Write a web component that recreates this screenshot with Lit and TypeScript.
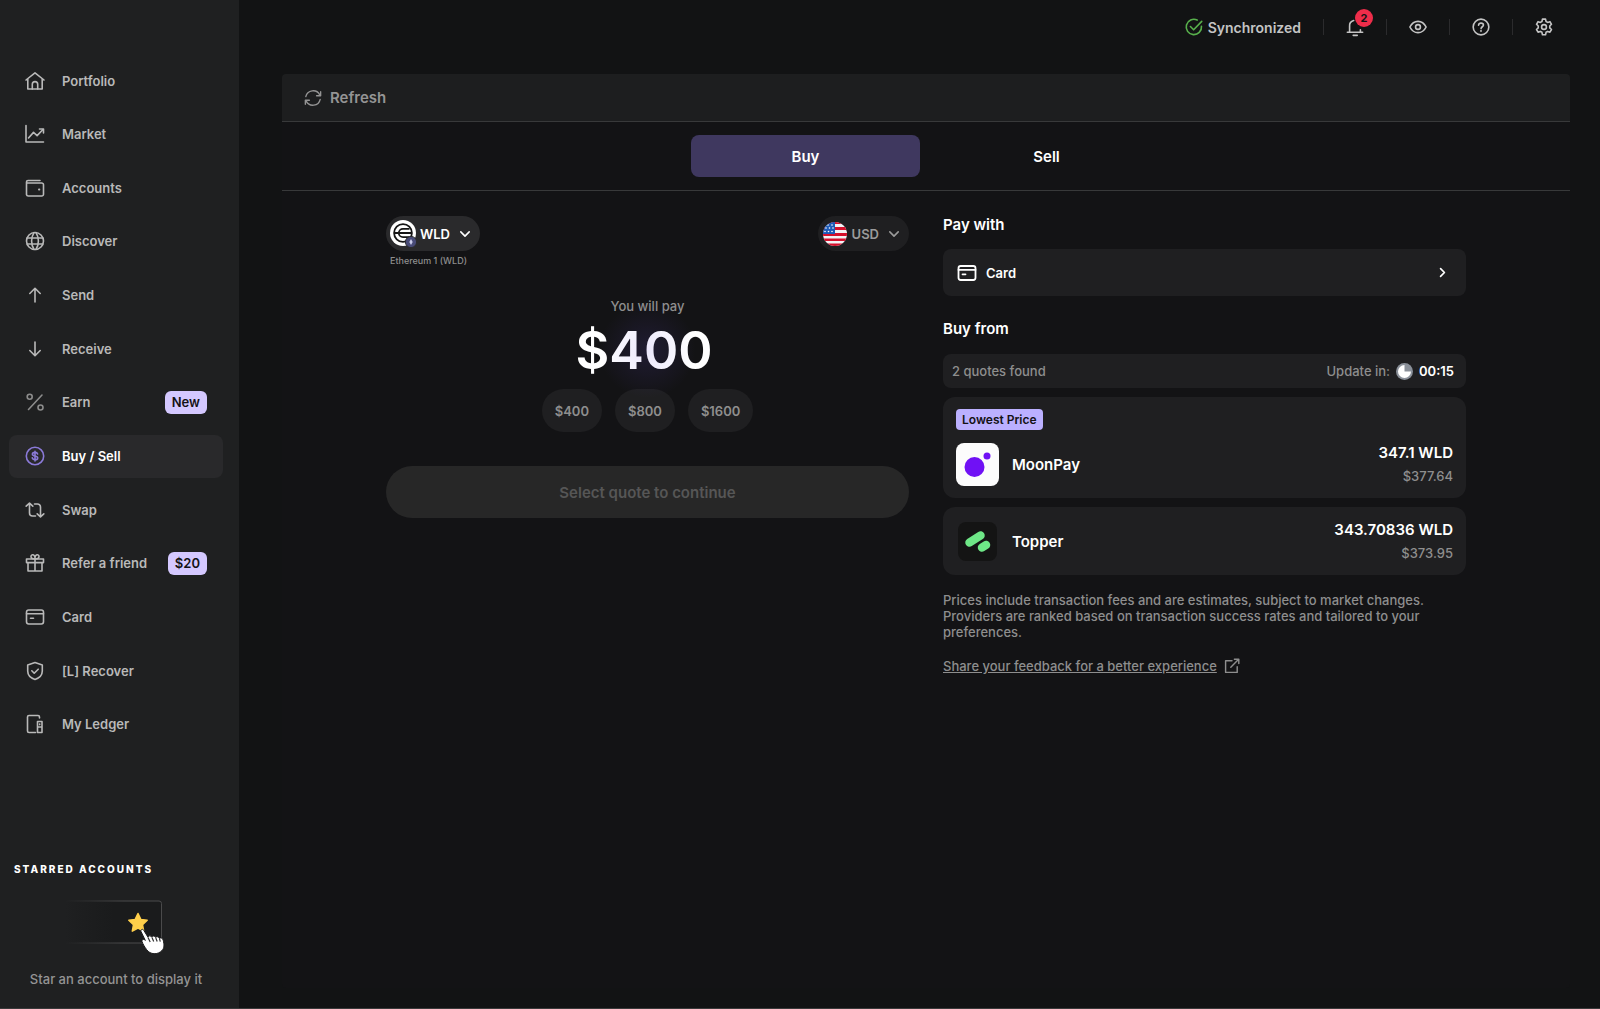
import { LitElement, html, css, svg, nothing, type TemplateResult, type SVGTemplateResult } from "lit";
import { customElement, property, state } from "lit/decorators.js";
import { classMap } from "lit/directives/class-map.js";

const icons: Record<string, SVGTemplateResult> = {
  home: svg`<path d="M1 9 10 1.800 19 9M2.800 8v10h14.400V8"/><path d="M7.300 18v-4.700a2.700 2.700 0 0 1 5.400 0V18"/>`,
  market: svg`<path d="M1 1.500V18h17.500M3.500 14l5-5.600 3.600 3.200L18 5.500"/><path d="M14.500 5h4v4"/>`,
  wallet: svg`<path d="M15 2.500H3A1.500 1.500 0 0 0 1.500 4v12.500A1.800 1.800 0 0 0 3.300 18h13.400a1.800 1.800 0 0 0 1.800-1.800V6.800A1.800 1.800 0 0 0 16.700 5H2.500"/><path d="M14 11.400h.3" stroke-width="2"/>`,
  globe: svg`<circle cx="10" cy="10" r="8.500"/><path d="M2.300 7h15.400M2.300 13h15.400"/><path d="M9 1.600c-3.200 5-3.200 11.800 0 16.800M11 1.600c3.200 5 3.200 11.800 0 16.800"/>`,
  send: svg`<path d="M10 17V3.500M4.800 8.500 10 3.300l5.200 5.200"/>`,
  receive: svg`<path d="M10 3v13.500M4.800 11.500l5.200 5.200 5.200-5.200"/>`,
  percent: svg`<path d="M17 3 3.500 17.500"/><circle cx="4.700" cy="4.700" r="2.500"/><circle cx="15.500" cy="15.500" r="2.500"/>`,
  dollar: svg`<circle cx="10" cy="10" r="8.700"/><path d="M12.600 8c-.3-1-1.300-1.600-2.600-1.600-1.500 0-2.600.7-2.600 1.800 0 2.600 5.300 1 5.300 3.700 0 1.100-1.100 1.800-2.700 1.800-1.400 0-2.500-.7-2.700-1.800M10 5.300v9.600"/>`,
  swap: svg`<path d="M4.500 3.800V13a3 3 0 0 0 3 3h3M1.200 6.200l3.300-3 3.300 3M15.500 16.200V7a3 3 0 0 0-3-3h-3M12.200 13.800l3.300 3 3.300-3"/>`,
  gift: svg`<path d="M1.500 6h17v3.600h-17zM3 9.600V18h14V9.600M10 6v12"/><path d="M10 6C8.500 6 6 5.600 6 3.600 6 1.200 9.400.8 10 4.500 10.600.8 14 1.200 14 3.600 14 5.600 11.500 6 10 6z"/>`,
  card: svg`<rect x="1.500" y="3" width="17" height="14" rx="2.200"/><path d="M1.500 6.800h17M5.500 11.300h3"/>`,
  shield: svg`<path d="M10 1.600 2.700 4v6c0 4 3 7 7.300 8.500 4.300-1.500 7.300-4.500 7.300-8.500V4z"/><path d="m6.800 9.800 2.400 2.400 4-4"/>`,
  ledger: svg`<path d="M10.500 18.500H4A1.500 1.500 0 0 1 2.500 17V3A1.500 1.500 0 0 1 4 1.500h9A1.500 1.500 0 0 1 14.500 3v1"/><path d="M12.500 7.500h4.500v11h-4.500zM12.500 13h4.500M14.700 10v.6"/>`,
  synced: svg`<path d="M18.300 9.200A8.500 8.500 0 1 1 13.500 2.300"/><path d="m6 9.500 3.600 3.600 9-9.300"/>`,
  bell: svg`<path d="M1.500 15.800h17M4 15.500V9a6 6 0 0 1 4.500-6.200M16 15.500V13"/><path d="M8 19.300h4.500"/>`,
  eye: svg`<path d="M1 10c2-4 5.200-6.300 9-6.300S17 6 19 10c-2 4-5.200 6.300-9 6.300S3 14 1 10z"/><circle cx="10" cy="10" r="2.700"/>`,
  help: svg`<circle cx="10" cy="10" r="8.700"/><path d="M7.300 8c.2-1.500 1.300-2.300 2.700-2.300 1.600 0 2.700.9 2.700 2.200 0 1.800-2.600 1.900-2.600 3.900M10 14v.8"/>`,
  gear: svg`<path d="M8.300 1.300h3.400l.6 2.600 1.700 1 2.600-.8 1.700 2.900-1.900 1.900v2l1.900 1.900-1.700 2.900-2.600-.8-1.700 1-.6 2.700H8.300l-.6-2.700-1.700-1-2.600.8-1.700-2.900 1.900-1.900v-2L1.700 7l1.700-2.900 2.600.8 1.700-1z"/><circle cx="10" cy="10" r="2.700"/>`,
  refresh: svg`<path d="M2 8.500A8.300 8.300 0 0 1 17.500 6.500M18.500 3v4.500H14M18 11.500A8.300 8.300 0 0 1 2.500 13.500M1.500 17v-4.500H6"/>`,
  down: svg`<path d="m3 6.500 7 7 7-7"/>`,
  right: svg`<path d="m6.500 3 7 7-7 7"/>`,
  external: svg`<path d="M10 3.500H2V18h14.500v-7M13 1.500h5.500V7M18 2 8.500 11.500"/>`,
};

@customElement("ui-icon")
export class UiIcon extends LitElement {
  static styles = css`
    :host { display: block; flex: none; width: 20px; height: 20px; }
    svg { display: block; width: 100%; height: 100%; fill: none; stroke: currentColor; stroke-linecap: round; stroke-linejoin: round; overflow: visible; }
  `;
  @property() name = "";
  @property({ type: Number }) weight = 1.6;
  render() {
    return html`<svg viewBox="0 0 20 20" aria-hidden="true" stroke-width=${this.weight}>${icons[this.name]}</svg>`;
  }
}

interface NavItem { icon: string; label: string; badge?: string; active?: boolean }

const navItems: NavItem[] = [
  { icon: "home", label: "Portfolio" },
  { icon: "market", label: "Market" },
  { icon: "wallet", label: "Accounts" },
  { icon: "globe", label: "Discover" },
  { icon: "send", label: "Send" },
  { icon: "receive", label: "Receive" },
  { icon: "percent", label: "Earn", badge: "New" },
  { icon: "dollar", label: "Buy / Sell", active: true },
  { icon: "swap", label: "Swap" },
  { icon: "gift", label: "Refer a friend", badge: "$20" },
  { icon: "card", label: "Card" },
  { icon: "shield", label: "[L] Recover" },
  { icon: "ledger", label: "My Ledger" },
];

@customElement("side-bar")
export class SideBar extends LitElement {
  static styles = css`
    :host { display: flex; flex-direction: column; box-sizing: border-box; padding: 59px 0 21px; background: #1f2021; }
    nav { flex: 1; display: flex; flex-direction: column; justify-content: space-between; padding: 0 16px 0 9px; }
    .item { display: flex; align-items: center; height: 43px; padding: 0 16px; gap: 17px; border-radius: 8px; color: #b9b9b9; font-size: 13px; font-weight: 600; text-decoration: none; }
    .item.active { background: #29292b; color: #fff; }
    .item.active ui-icon { color: #8b7ad8; }
    .item.dim ui-icon { color: #8c8c8c; }
    .badge { margin-left: auto; padding: 0 7px; border-radius: 6px; background: #d4c8ff; color: #131214; line-height: 23px; }
    .starred { margin-top: 115px; }
    h2 { margin: 0 14px; color: #fff; font-size: 10px; line-height: 16px; font-weight: 800; letter-spacing: 2px; }
    .art { display: block; width: 104px; height: 56px; margin: 22px 0 0 65px; }
    p { margin: 16px 7px 0 0; text-align: center; color: #949494; font-size: 13px; line-height: 16px; font-weight: 500; }
  `;
  render() {
    return html`
      <nav aria-label="Main">
        ${navItems.map((i) => html`
          <a href="#" class=${classMap({ item: true, active: !!i.active, dim: i.icon === "percent" })}>
            <ui-icon name=${i.icon}></ui-icon><span>${i.label}</span>
            ${i.badge ? html`<span class="badge">${i.badge}</span>` : nothing}
          </a>`)}
      </nav>
      <section class="starred">
        <h2>STARRED ACCOUNTS</h2>
        <svg class="art" viewBox="0 0 104 56" aria-hidden="true">
          <defs>
            <linearGradient id="edge" gradientUnits="userSpaceOnUse" x1="0" x2="97" y1="0" y2="0"><stop offset="0" stop-color="#4a4a4b" stop-opacity="0"/><stop offset=".6" stop-color="#4a4a4b"/></linearGradient>
            <linearGradient id="fill" gradientUnits="userSpaceOnUse" x1="0" x2="97" y1="0" y2="0"><stop offset="0" stop-color="#1a1b1c" stop-opacity="0"/><stop offset=".5" stop-color="#1a1b1c"/></linearGradient>
          </defs>
          <path d="M0 2h94a2.500 2.500 0 0 1 2.500 2.500v37a2.500 2.500 0 0 1-2.500 2.500H0z" fill="url(#fill)"/>
          <path d="M0 2h94a2.500 2.500 0 0 1 2.500 2.500v37a2.500 2.500 0 0 1-2.500 2.500H0" fill="none" stroke="url(#edge)"/>
          <path d="m73 14.500 2.800 5.900 6.400.8-4.700 4.500 1.200 6.400-5.700-3.100-5.700 3.100 1.200-6.400-4.700-4.500 6.400-.8z" fill="#ffcf4a" stroke="#ffcf4a" stroke-width="1.500" stroke-linejoin="round"/>
          <path d="M76 32.500c-.7-1.900 1.700-3 2.700-1.300l4.300 7c.5-1.700 2.900-1.900 3.700 0 .9-1.700 3.300-1.500 3.900.3 1.200-1.300 3.200-.9 3.700.9 1.600-1 3.500-.2 3.900 1.700 1 4.800 1.400 7.500-1.200 10.400-4.300 4.600-11.800 4.200-15.300-.8-1.900-2.700-4-5.800-4.700-8.300-.4-2 2.200-2.700 3.300-1z" fill="#fff" stroke="#1b1b1c" stroke-width="1"/>
          <path d="m83 38.500 2.200 4.500M87 38.500l1.700 4M90.800 39l1.400 3.500M94.500 39.800l.8 2.800" stroke="#333" stroke-width="1.200"/>
        </svg>
        <p>Star an account to display it</p>
      </section>`;
  }
}

@customElement("top-bar")
export class TopBar extends LitElement {
  static styles = css`
    :host { display: flex; align-items: center; justify-content: flex-end; height: 54px; padding-right: 47px; color: #c4c4c4; }
    button { display: flex; align-items: center; position: relative; padding: 0; border: 0; background: none; color: inherit; font: inherit; font-size: 14px; font-weight: 600; gap: 5px; }
    .tool { padding: 0 22px; border-left: 1px solid #2b2b2d; height: 16px; }
    .tool:last-child { padding-right: 0; }
    .sync { margin-right: 22px; }
    .sync ui-icon { color: #58b04c; }
    ui-icon { width: 18px; height: 18px; }
    .count { position: absolute; left: 31px; top: -10px; width: 18px; border-radius: 9px; background: #ee2d4a; color: #131214; font-size: 11px; line-height: 18px; font-weight: 700; text-align: center; }
  `;
  render() {
    return html`
      <button class="sync"><ui-icon name="synced" weight="1.8"></ui-icon>Synchronized</button>
      <button class="tool" aria-label="Notifications"><ui-icon name="bell" weight="1.8"></ui-icon><span class="count">2</span></button>
      <button class="tool" aria-label="Discreet mode"><ui-icon name="eye" weight="1.8"></ui-icon></button>
      <button class="tool" aria-label="Help"><ui-icon name="help" weight="1.8"></ui-icon></button>
      <button class="tool" aria-label="Settings"><ui-icon name="gear" weight="1.8"></ui-icon></button>`;
  }
}

const wldLogo = html`<svg class="coin" viewBox="0 0 28 28" aria-hidden="true">
  <circle cx="13" cy="13" r="13" fill="#fff"/>
  <g fill="none" stroke="#161616" stroke-width="1.800">
    <circle cx="13" cy="13" r="8.900"/><path d="M4.500 13h17M19.500 8.800H13a4.200 4.200 0 0 0 0 8.400h6.500"/>
  </g>
  <circle cx="21" cy="22" r="5.600" fill="#484b78" stroke="#2b2b2d"/>
  <path d="m21 19 1.700 3-1.700 3-1.700-3z" fill="#c9cbea"/>
</svg>`;

const usFlag = html`<svg class="flag" viewBox="0 0 24 24" aria-hidden="true">
  <defs><clipPath id="round"><circle cx="12" cy="12" r="12"/></clipPath></defs>
  <g clip-path="url(#round)">
    <path d="M0 0h24v24H0z" fill="#f3f3f5"/>
    <path d="M0 0h24v2H0zM0 5h24v3H0zM0 11h24v3H0zM0 16.500h24v2.500H0zM0 21.500h24V24H0z" fill="#d4102c"/>
    <path d="M0 0h12v12H0z" fill="#1d5bb8"/>
    <g fill="#fff"><circle cx="5" cy="3" r=".8"/><circle cx="9" cy="3" r=".8"/><circle cx="3" cy="6" r=".8"/><circle cx="6.500" cy="6" r=".8"/><circle cx="10" cy="6" r=".8"/><circle cx="2" cy="9.500" r=".8"/><circle cx="5.500" cy="9.500" r=".8"/><circle cx="9" cy="9.500" r=".8"/></g>
  </g>
</svg>`;

const moonpayLogo = html`<svg viewBox="0 0 43 43" aria-hidden="true">
  <rect width="43" height="43" rx="8" fill="#fcfcfc"/><circle cx="18.500" cy="24" r="10" fill="#7011f5"/><circle cx="31" cy="13" r="3.500" fill="#7011f5"/>
</svg>`;

const topperLogo = html`<svg viewBox="0 0 43 43" aria-hidden="true">
  <rect x="2" y="2" width="39" height="39" rx="8" fill="#141414"/>
  <g stroke="#6ee787" stroke-width="8.500" stroke-linecap="round"><path d="m13.500 22.500 11-7M26 27.500l4-2.500"/></g>
</svg>`;

interface Quote { name: string; logo: TemplateResult; amount: string; fiat: string; tag?: string }

const quotes: Quote[] = [
  { name: "MoonPay", logo: moonpayLogo, amount: "347.1 WLD", fiat: "$377.64", tag: "Lowest Price" },
  { name: "Topper", logo: topperLogo, amount: "343.70836 WLD", fiat: "$373.95" },
];

@customElement("amount-form")
export class AmountForm extends LitElement {
  static styles = css`
    :host { display: flex; flex-direction: column; }
    button { border: 0; font: inherit; color: inherit; }
    .pickers { display: flex; justify-content: space-between; align-items: flex-start; }
    .pill { display: flex; align-items: center; height: 35px; padding: 0 9px 0 4px; border-radius: 18px; background: #2a2a2c; color: #fff; font-size: 13px; font-weight: 600; }
    .pill.fiat { padding-left: 5px; background: #1f1f21; color: #9b9b9b; }
    .coin { width: 28px; height: 28px; margin: 1px 2px 0 0; }
    .flag { width: 24px; height: 24px; margin-right: 5px; }
    .pill ui-icon { width: 12px; height: 12px; margin-left: 9px; }
    .account { margin: 4px 0 0 4px; color: #8e8e8e; font-size: 9px; line-height: 12px; font-weight: 500; }
    .pay { margin-top: 31px; text-align: center; color: #8e8e8e; font-size: 13px; line-height: 16px; font-weight: 500; }
    .amount { position: relative; display: flex; justify-content: center; margin-top: 4px; }
    .amount::after { content: ""; position: absolute; inset: -16px 0; background: radial-gradient(circle closest-side, rgba(110, 80, 230, 0.14), rgba(110, 80, 230, 0)); pointer-events: none; }
    input { width: 144px; height: 64px; padding: 0; border: 0; background: none; color: #fff; font: inherit; font-size: 52px; font-weight: 600; outline: none; }
    .presets { display: flex; justify-content: center; gap: 13px; margin-top: 7px; }
    .presets button { height: 43px; padding: 0 13px; border-radius: 22px; background: #1f1f21; color: #8e8e8e; font-size: 13px; font-weight: 600; }
    .submit { height: 52px; margin-top: 34px; border-radius: 26px; background: #272727; color: #565656; font-size: 15px; font-weight: 600; }
  `;
  render() {
    return html`
      <div class="pickers">
        <div>
          <button class="pill">${wldLogo}WLD<ui-icon name="down" weight="2.6"></ui-icon></button>
          <div class="account">Ethereum 1 (WLD)</div>
        </div>
        <button class="pill fiat">${usFlag}USD<ui-icon name="down" weight="2.6"></ui-icon></button>
      </div>
      <label class="pay" for="amount">You will pay</label>
      <div class="amount"><input id="amount" type="text" value="$400"></div>
      <div class="presets">${["$400", "$800", "$1600"].map((v) => html`<button>${v}</button>`)}</div>
      <button class="submit" disabled>Select quote to continue</button>`;
  }
}

@customElement("quote-list")
export class QuoteList extends LitElement {
  static styles = css`
    :host { display: flex; flex-direction: column; color: #fff; }
    button { box-sizing: border-box; width: 100%; border: 0; font: inherit; color: inherit; text-align: left; background: #1f1f21; }
    h2 { margin: 0; font-size: 15px; line-height: 18px; font-weight: 600; }
    .method { display: flex; align-items: center; gap: 9px; height: 47px; margin: 15px 0 24px; padding: 0 18px 0 14px; border-radius: 8px; font-size: 13px; font-weight: 600; }
    .method ui-icon:last-child { width: 11px; height: 11px; margin-left: auto; }
    .status { display: flex; align-items: center; height: 34px; margin-top: 16px; padding: 0 12px 0 9px; border-radius: 8px; background: #1f1f21; color: #8e8e8e; font-size: 13px; font-weight: 500; }
    .status svg { width: 17px; height: 17px; margin: 0 6px; }
    .status .timer { margin-left: auto; }
    .status time { color: #fff; font-weight: 600; }
    .quote { display: block; margin-top: 9px; padding: 12px 13px; border-radius: 12px; }
    .tag { display: block; width: fit-content; margin-bottom: 12px; padding: 0 6px; border-radius: 4px; background: #bbb0ff; color: #131214; font-size: 12px; line-height: 21px; font-weight: 600; }
    .row { display: flex; align-items: center; gap: 13px; height: 44px; font-size: 15px; font-weight: 600; }
    .row svg { width: 43px; height: 43px; }
    .values { margin-left: auto; text-align: right; line-height: 20px; }
    .values span { display: block; margin-top: 3px; color: #8e8e8e; font-size: 13px; line-height: 20px; font-weight: 500; }
    p { margin: 17px 0 18px; color: #8e8e8e; font-size: 13px; line-height: 16px; font-weight: 500; }
    a { display: flex; align-items: center; align-self: flex-start; gap: 7px; color: #8e8e8e; font-size: 13px; line-height: 16px; font-weight: 500; text-decoration: none; }
    a span { text-decoration: underline; }
    a ui-icon { width: 16px; height: 16px; }
  `;
  render() {
    return html`
      <h2>Pay with</h2>
      <button class="method"><ui-icon name="card" weight="1.8"></ui-icon>Card<ui-icon name="right" weight="3"></ui-icon></button>
      <h2>Buy from</h2>
      <div class="status">
        <span>2 quotes found</span><span class="timer">Update in:</span>
        <svg viewBox="0 0 17 17" aria-hidden="true"><circle cx="8.500" cy="8.500" r="8.500" fill="#8a9099"/><path d="M8.500 8.500V2a6.500 6.500 0 1 0 6.500 6.500z" fill="#fff"/></svg>
        <time>00:15</time>
      </div>
      ${quotes.map((q) => html`
        <button class="quote">
          ${q.tag ? html`<span class="tag">${q.tag}</span>` : nothing}
          <div class="row">${q.logo}${q.name}<div class="values">${q.amount}<span>${q.fiat}</span></div></div>
        </button>`)}
      <p>Prices include transaction fees and are estimates, subject to market changes. Providers are ranked based on transaction success rates and tailored to your preferences.</p>
      <a href="#"><span>Share your feedback for a better experience</span><ui-icon name="external" weight="1.8"></ui-icon></a>`;
  }
}

@customElement("app-root")
export class AppRoot extends LitElement {
  static styles = css`
    :host { display: grid; grid-template-columns: 239px 1fr; box-sizing: border-box; min-height: 100vh; border-bottom: 1px solid #3a3a3b; background: #121314; font-family: Inter, "Liberation Sans", sans-serif; }
    main { display: flex; flex-direction: column; min-width: 0; }
    .panel { flex: 1; margin: 20px 30px 20px 43px; background: #131315; border-radius: 4px; }
    .head { display: flex; height: 47px; padding: 0 22px; background: #1d1e1f; border-bottom: 1px solid #38393a; border-radius: 4px 4px 0 0; }
    button { border: 0; background: none; color: #fff; font: inherit; font-size: 15px; font-weight: 600; }
    .refresh { display: flex; align-items: center; padding: 0; gap: 8px; color: #949494; }
    .refresh ui-icon { width: 18px; height: 18px; }
    .tabs { display: flex; justify-content: center; gap: 12px; padding: 13px; border-bottom: 1px solid #38393a; }
    .tabs button { width: 229px; height: 42px; border-radius: 8px; }
    .tabs .on { background: #3f385f; }
    .columns { display: grid; grid-template-columns: 1fr 1fr; gap: 34px; max-width: 1080px; margin: 0 auto; padding: 25px 20px; }
  `;
  @state() private tab = "Buy";
  render() {
    return html`
      <side-bar></side-bar>
      <main>
        <top-bar></top-bar>
        <div class="panel">
          <div class="head"><button class="refresh"><ui-icon name="refresh" weight="1.5"></ui-icon>Refresh</button></div>
          <div class="tabs">
            ${["Buy", "Sell"].map((t) => html`<button class=${classMap({ on: this.tab === t })} @click=${() => (this.tab = t)}>${t}</button>`)}
          </div>
          <div class="columns"><amount-form></amount-form><quote-list></quote-list></div>
        </div>
      </main>`;
  }
}
